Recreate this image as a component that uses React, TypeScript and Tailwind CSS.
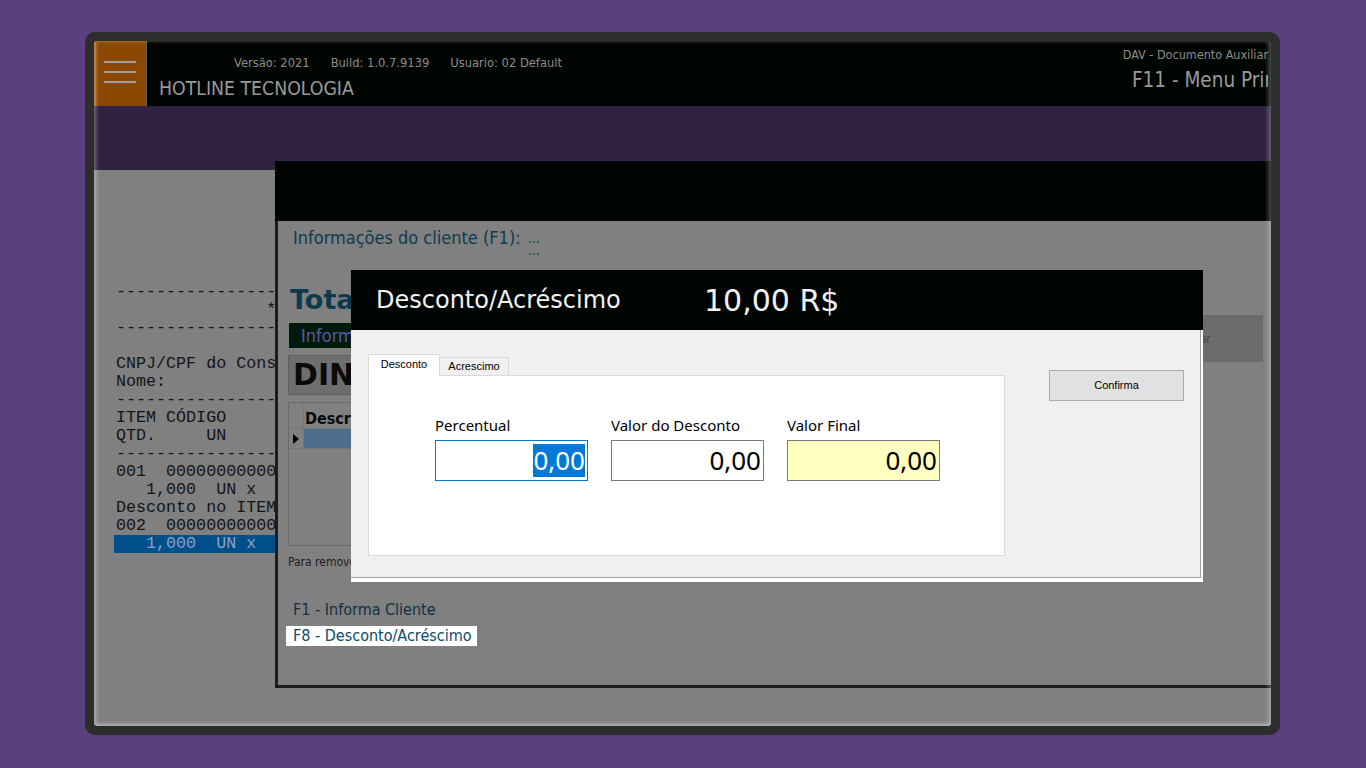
const dv = "font-['DejaVu_Sans',sans-serif]";
const dvc = "font-['DejaVu_Sans_Condensed','DejaVu_Sans',sans-serif]";
const narrow = "font-['Liberation_Sans_Narrow','DejaVu_Sans_Condensed',sans-serif]";
const ui = "font-['Noto_Sans',sans-serif]";
const ms = "font-['Liberation_Sans',sans-serif]";
const mono = "font-['Liberation_Mono',monospace]";

const RECEIPT = [
  "--------------------------------------------",
  "               ***********",
  "--------------------------------------------",
  "",
  "CNPJ/CPF do Consumidor:",
  "Nome:",
  "--------------------------------------------",
  "ITEM CÓDIGO       DESCRIÇÃO",
  "QTD.     UN       VL UNIT R$",
  "--------------------------------------------",
  "001  0000000000001  PRODUTO TESTE",
  "   1,000  UN x   10,00",
  "Desconto no ITEM",
  "002  0000000000002  PRODUTO TESTE",
];

function Header() {
  return (
    <div className="h-[65px] shrink-0 bg-[#000400] flex">
      <div className="w-[53px] bg-[#8a4800] border-l-2 border-[#a85800] border-r border-r-[#5e5e5e] flex flex-col gap-[8px] pl-[8px] pt-[20px]">
        <div className="w-[32px] h-[2px] bg-[#9c9c9c]" />
        <div className="w-[32px] h-[2px] bg-[#9c9c9c]" />
        <div className="w-[32px] h-[2px] bg-[#9c9c9c]" />
      </div>
      <div className={`flex-1 pl-[12px] pt-[15px] ${dvc}`}>
        <div className="flex gap-[21px] pl-[75px] text-[12.8px] leading-[14px] text-[#8c8c8c]">
          <span>Versão: 2021</span>
          <span>Build: 1.0.7.9139</span>
          <span>Usuario: 02 Default</span>
        </div>
        <div className="mt-[7px] text-[19.3px] leading-[24px] text-[#9a9a9a]">HOTLINE TECNOLOGIA</div>
      </div>
      <div className={`flex flex-col items-end pr-[3px] pt-[7px] ${dvc}`}>
        <div className="text-[12.5px] leading-[14px] text-[#8c8c8c] whitespace-nowrap">DAV - Documento Auxiliar</div>
        <div className="mt-[6px] w-[136px] overflow-hidden whitespace-nowrap text-[20.5px] leading-[24px] text-[#9a9a9a]">
          F11 - Menu Principal
        </div>
      </div>
    </div>
  );
}

function Receipt() {
  return (
    <div className={`flex-1 pt-[113px] pl-[22px] ${mono} text-[16.7px] leading-[18px] text-[#141414] whitespace-pre`}>
      {RECEIPT.map((line, i) => (
        <div key={i} className="h-[18px]">{line}</div>
      ))}
      <div className="h-[18px] -ml-[2px] pl-[2px] bg-[#004f8a] text-[#86a3c4]">{"   1,000  UN x   10,00"}</div>
    </div>
  );
}

function ClientWindow() {
  return (
    <div className="absolute left-[181px] top-[120px] right-0 h-[527px] flex flex-col">
      <div className="h-[60px] shrink-0 bg-[#000400]" />
      <div className="flex-1 flex bg-[#808080] border-l-[3px] border-b-[3px] border-[#1c1c1c]">
        <div className="flex-1 min-w-0 overflow-hidden flex flex-col items-start pl-[10px] pt-[7px]">
          <div className={`ml-[5px] flex ${dvc} text-[18px] leading-[20px] text-[#0e3b4d]`}>
            <span>Informações do cliente (F1):</span>
            <div className="ml-[7px] flex flex-col text-[14px] leading-[12px] pt-[4px]">
              <span>...</span>
              <span>...</span>
            </div>
          </div>
          <div className={`mt-[28px] ml-[2px] ${dv} font-bold text-[27px] leading-[32px] text-[#0b3a4f]`}>Total: 10,00</div>
          <div className={`mt-[7px] ml-[1px] w-[810px] h-[25px] bg-[#001a0c] pl-[12px] ${dvc} text-[18px] leading-[25px] text-[#5a5aa6]`}>
            Informações de pagamento
          </div>
          <div className={`mt-[7px] w-[811px] h-[40px] bg-[#6e6e6e] border border-[#5e5e5e] pl-[4px] ${dv} font-bold text-[30px] leading-[38px] text-[#0a0a0a]`}>
            DINHEIRO
          </div>
          <div className="mt-[7px] w-[811px] h-[144px] border border-[#6a6a6a] flex flex-col">
            <div className="h-[26px] flex border-b border-[#777777]">
              <div className="w-[15px] border-r border-[#777777]" />
              <div className={`pl-[1px] pt-[3px] ${dvc} font-bold text-[16px] leading-[26px] text-[#0a0a0a]`}>Descrição</div>
            </div>
            <div className="h-[20px] flex border-b border-[#777777]">
              <div className="w-[15px] border-r border-[#777777] flex items-center justify-center">
                <svg width="6" height="10" viewBox="0 0 6 10">
                  <path d="M0 0 L6 5 L0 10 Z" fill="#000" />
                </svg>
              </div>
              <div className="flex-1 bg-[#4f6e8e]" />
            </div>
          </div>
          <div className={`mt-[8px] ${dvc} text-[12px] leading-[16px] text-[#1c1c1c]`}>
            Para remover um item, selecione e pressione DEL
          </div>
          <div className={`mt-[30px] ml-[5px] ${narrow} text-[16px] leading-[20px] text-[#0f3242]`}>F1 - Informa Cliente</div>
          <div className={`mt-[6px] -ml-[2px] h-[20px] bg-white pl-[7px] pr-[5px] ${narrow} text-[16px] leading-[20px] text-[#0b4b6b]`}>
            F8 - Desconto/Acréscimo
          </div>
        </div>
        <div className="w-[152px] shrink-0 mr-[8px] pt-[94px]">
          <div className={`h-[47px] bg-[#6b6b6b] flex items-center justify-center ${dvc} text-[12px] text-[#474747]`}>
            Cancelar
          </div>
        </div>
      </div>
    </div>
  );
}

function Field({ label, value, variant }: { label: string; value: string; variant: "active" | "normal" | "final" }) {
  const box =
    variant === "active"
      ? "border-[#0078d7] bg-white"
      : variant === "final"
      ? "border-[#7a7a7a] bg-[#ffffc0]"
      : "border-[#7a7a7a] bg-white";
  return (
    <div className="w-[153px]">
      <div className={`${ui} text-[15px] leading-[20px] text-black`}>{label}</div>
      <div className={`mt-[5px] h-[41px] border ${box} flex items-center justify-end pr-[2px]`}>
        {variant === "active" ? (
          <span className={`${ui} text-[26px] leading-[33px] bg-[#0078d7] text-white`}>{value}</span>
        ) : (
          <span className={`${ui} text-[26px] leading-[33px] text-black`}>{value}</span>
        )}
      </div>
    </div>
  );
}

function DiscountDialog() {
  return (
    <div className="absolute left-[257px] top-[229px] w-[852px] h-[312px] bg-white flex flex-col">
      <div className={`h-[60px] shrink-0 bg-[#000400] flex items-center pl-[25px] ${dv} text-[#f2f2f2]`}>
        <span className="w-[328px] text-[24px]">Desconto/Acréscimo</span>
        <span className="text-[30px]">10,00 R$</span>
      </div>
      <div className="flex-1 mr-[2px] mb-[4px] bg-[#f0f0f0] border-r border-b border-[#a0a0a0] flex items-start pl-[17px] pt-[24px]">
        <div className="w-[637px] flex flex-col">
          <div className={`flex items-end h-[21px] ${ms} text-[11px] text-black`}>
            <div className="relative z-10 -mb-px w-[72px] h-[22px] bg-white border border-b-0 border-[#d9d9d9] flex items-center justify-center pb-[3px]">
              Desconto
            </div>
            <div className="w-[69px] h-[18px] bg-[#f0f0f0] border border-l-0 border-b-0 border-[#d9d9d9] flex items-center justify-center">
              Acrescimo
            </div>
          </div>
          <div className="h-[181px] bg-white border border-[#dadada] flex gap-[23px] pl-[66px] pt-[39px]">
            <Field label="Percentual" value="0,00" variant="active" />
            <Field label="Valor do Desconto" value="0,00" variant="normal" />
            <Field label="Valor Final" value="0,00" variant="final" />
          </div>
        </div>
        <button className={`ml-[44px] mt-[16px] w-[135px] h-[31px] bg-[#e1e1e1] border border-[#adadad] ${ms} text-[11px] text-black`}>
          Confirma
        </button>
      </div>
    </div>
  );
}

export default function App() {
  return (
    <div className="w-full h-screen bg-[#5b3f7f] pl-[85px] pt-[32px]">
      <div className="w-[1195px] h-[703px] rounded-[10px] bg-[#2d2d2d] p-[9px]">
        <div className="relative w-full h-full overflow-hidden rounded-[3px] bg-[#808080] flex flex-col">
          <Header />
          <div className="h-[64px] shrink-0 bg-[#2f2141]" />
          <Receipt />
          <ClientWindow />
          <DiscountDialog />
          <div className="pointer-events-none absolute inset-0 rounded-[3px] shadow-[inset_2px_-2px_4px_rgba(255,255,255,0.35),inset_-3px_0_4px_rgba(255,255,255,0.25)]" />
        </div>
      </div>
    </div>
  );
}
